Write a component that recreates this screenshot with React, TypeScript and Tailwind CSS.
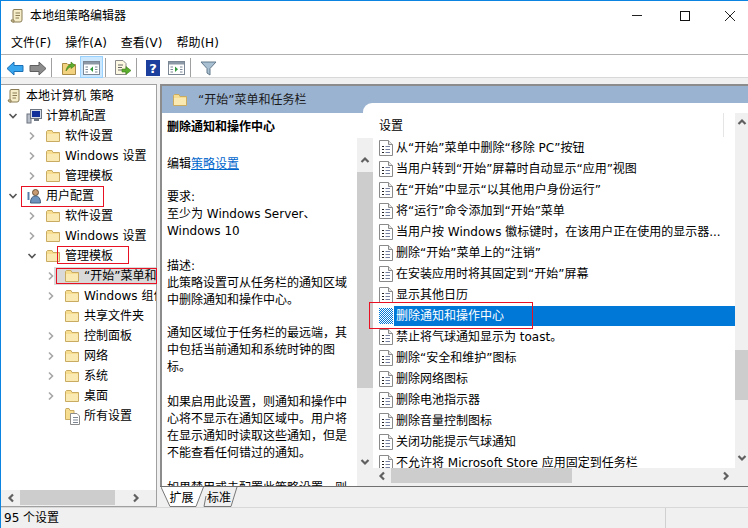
const Folder = ({ className = "" }: { className?: string }) => (
  <svg width="16" height="14" viewBox="0 0 16 14" className={className}>
    <path d="M1.5 2.5 V12.5 H14.5 V3.5 H8 L7 1.5 H2.5 Z" fill="#f7dd8f" stroke="#c9ab62" />
    <path d="M2 5 H14 V12 H2 Z" fill="#fbe9b2" />
  </svg>
);

const Chevron = ({ open }: { open?: boolean }) => (
  <svg width="10" height="10" viewBox="0 0 10 10" className="shrink-0">
    {open ? (
      <path d="M1.5 3 L5 6.5 L8.5 3" fill="none" stroke="#555" strokeWidth="1.6" />
    ) : (
      <path d="M3 1.5 L6.5 5 L3 8.5" fill="none" stroke="#a6a6a6" strokeWidth="1.6" />
    )}
  </svg>
);

const Scroll = () => (
  <svg width="17" height="17" viewBox="0 0 17 17" className="shrink-0">
    <path d="M5 2.5 H13 V13 Q13 15 11 15 H4 V4 Q4 2.5 5 2.5" fill="#f5ecc8" stroke="#8a7d55" />
    <path d="M6.5 6 H11 M6.5 8.5 H11 M6.5 11 H10" stroke="#8a7d55" />
    <path d="M2 13 H5 V15 H3 Z" fill="#e5d9ac" stroke="#8a7d55" />
  </svg>
);

const Monitor = () => (
  <svg width="16" height="16" viewBox="0 0 16 16" className="shrink-0">
    <rect x="1" y="6" width="4" height="9" fill="#b9bfc8" stroke="#6c7480" />
    <rect x="4.5" y="1.5" width="11" height="9" fill="#d7dde6" stroke="#6c7480" />
    <rect x="6" y="3" width="8" height="6" fill="#12309a" />
    <path d="M8 12 H13" stroke="#6c7480" strokeWidth="2" />
  </svg>
);

const Users = () => (
  <svg width="16" height="16" viewBox="0 0 16 16" className="shrink-0">
    <circle cx="9.5" cy="4.5" r="3" fill="#c99b72" stroke="#6b5138" />
    <path d="M4.5 15 Q4.5 8 9.5 8 Q14.5 8 14.5 15 Z" fill="#6d93bd" stroke="#44607f" />
    <path d="M2.5 4 V12" stroke="#5a7fa8" strokeWidth="2" />
  </svg>
);

const AllSettings = () => (
  <svg width="18" height="18" viewBox="0 0 18 18" className="shrink-0">
    <path d="M1.5 2.5 V12.5 H10 V3.5 H6 L5 1.5 H2 Z" fill="#f7dd8f" stroke="#c9ab62" />
    <path d="M6.5 6.5 H13 L15.5 9 V17.5 H6.5 Z" fill="#fff" stroke="#8b8b8b" />
    <path d="M9 10.5 H14 M9 13 H14 M9 15.5 H14" stroke="#7d8593" />
  </svg>
);

const PolicyIcon = ({ selected }: { selected?: boolean }) =>
  selected ? (
    <svg width="14" height="16" viewBox="0 0 14 16" className="shrink-0">
      <defs>
        <pattern id="dither" width="2" height="2" patternUnits="userSpaceOnUse">
          <rect width="2" height="2" fill="#ffffff" />
          <rect width="1" height="1" fill="#0078d7" />
          <rect x="1" y="1" width="1" height="1" fill="#0078d7" />
        </pattern>
      </defs>
      <rect width="14" height="16" fill="url(#dither)" />
    </svg>
  ) : (
    <svg width="14" height="16" viewBox="0 0 14 16" className="shrink-0">
      <path d="M0.5 0.5 H9.5 L13.5 4.5 V15.5 H0.5 Z" fill="#fff" stroke="#8a8a8a" />
      <path d="M9.5 0.5 V4.5 H13.5" fill="#e6e6e6" stroke="#8a8a8a" />
      <path d="M3 6.5 H5 M3 9.5 H5 M3 12.5 H5" stroke="#222" />
      <path d="M6.5 6.5 H11 M6.5 9.5 H11 M6.5 12.5 H11" stroke="#7680a0" />
    </svg>
  );

const Sep = () => <div className="mt-[2px] h-[19px] w-px bg-[#a0a0a0]" />;

const Toolbar = () => (
  <div className="flex h-[23px] shrink-0 items-center border-b border-[#d8d8d8] bg-white pl-[5px] pt-[1px]">
    <svg width="18" height="15" viewBox="0 0 18 15" className="mr-[5px] mt-[3px]">
      <path d="M1 7.5 L8 1 V4.5 H17 V10.5 H8 V14 Z" fill="#38a6ee" stroke="#1b6fb5" />
    </svg>
    <svg width="18" height="15" viewBox="0 0 18 15" className="mr-[4px] mt-[3px]">
      <path d="M17 7.5 L10 1 V4.5 H1 V10.5 H10 V14 Z" fill="#8c8c8c" stroke="#5f5f5f" />
    </svg>
    <Sep />
    <svg width="16" height="16" viewBox="0 0 16 16" className="ml-[9px] mr-[3px] mt-[2px]">
      <path d="M1.5 3.5 V14.5 H14.5 V4.5 H7 L6 3.5 Z" fill="#f2d27e" stroke="#a98b45" />
      <path d="M5 11 Q6 5 10 4.5 V2 L14 5.5 L10 8.5 V6.5 Q7.5 7 5 11 Z" fill="#5cae2f" stroke="#3d7d1a" strokeWidth="0.6" />
    </svg>
    <div className="mr-[2px] flex h-[22px] w-[23px] items-center justify-center border border-[#99d1ff] bg-[#cce8ff]">
      <svg width="17" height="14" viewBox="0 0 17 14" className="mt-[2px]">
        <rect x="0.5" y="0.5" width="16" height="13" fill="#fff" stroke="#7b8794" />
        <rect x="1" y="1" width="15" height="2.5" fill="#8d98a6" />
        <path d="M2.5 6 H5 M2.5 8.5 H5 M2.5 11 H5 M12 6 H14.5 M12 8.5 H14.5 M12 11 H14.5" stroke="#7b8794" />
        <path d="M10 5.5 V11 L7 8.2 Z" fill="#2f9a3a" />
      </svg>
    </div>
    <Sep />
    <svg width="18" height="17" viewBox="0 0 18 17" className="ml-[8px] mr-[4px] mt-[2px]">
      <path d="M1.5 1.5 H9 L12 4.5 V15.5 H1.5 Z" fill="#fdf8e2" stroke="#8a8a8a" />
      <path d="M4 6 H9 M4 8.5 H8 M4 11 H8" stroke="#666" />
      <path d="M8 10 H12 V7.5 L17 11.5 L12 15.5 V13 H8 Z" fill="#5cae2f" stroke="#3d7d1a" strokeWidth="0.6" />
    </svg>
    <Sep />
    <div className="ml-[9px] mr-[8px] mt-[3px] flex h-[16px] w-[14px] items-center justify-center bg-[#1c3f9e] text-[13px] font-bold leading-none text-white">
      ?
    </div>
    <svg width="17" height="14" viewBox="0 0 17 14" className="mr-[5px] mt-[3px]">
      <rect x="0.5" y="0.5" width="16" height="13" fill="#fff" stroke="#7b8794" />
      <rect x="1" y="1" width="15" height="2.5" fill="#8d98a6" />
      <path d="M2.5 6 H5 M2.5 8.5 H5 M2.5 11 H5 M12 6 H14.5 M12 8.5 H14.5 M12 11 H14.5" stroke="#7b8794" />
      <path d="M7 5.5 V11 L10 8.2 Z" fill="#2f9a3a" />
    </svg>
    <Sep />
    <svg width="17" height="15" viewBox="0 0 17 15" className="ml-[9px] mt-[3px]">
      <path d="M1 1 H16 L10 7.5 V14 L7 12 V7.5 Z" fill="#a9c0d3" stroke="#63788a" />
    </svg>
  </div>
);

const tree = [
  { label: "计算机配置", pad: "pl-[7px]", chev: "open", icon: "monitor" },
  { label: "软件设置", pad: "pl-[26px]", chev: "closed", icon: "folder" },
  { label: "Windows 设置", pad: "pl-[26px]", chev: "closed", icon: "folder" },
  { label: "管理模板", pad: "pl-[26px]", chev: "closed", icon: "folder" },
  { label: "用户配置", pad: "pl-[7px]", chev: "open", icon: "users" },
  { label: "软件设置", pad: "pl-[26px]", chev: "closed", icon: "folder" },
  { label: "Windows 设置", pad: "pl-[26px]", chev: "closed", icon: "folder" },
  { label: "管理模板", pad: "pl-[26px]", chev: "open", icon: "folder" },
  { label: "“开始”菜单和任务栏", pad: "pl-[45px]", chev: "closed", icon: "folder", current: true },
  { label: "Windows 组件", pad: "pl-[45px]", chev: "closed", icon: "folder" },
  { label: "共享文件夹", pad: "pl-[45px]", chev: "none", icon: "folder" },
  { label: "控制面板", pad: "pl-[45px]", chev: "closed", icon: "folder" },
  { label: "网络", pad: "pl-[45px]", chev: "closed", icon: "folder" },
  { label: "系统", pad: "pl-[45px]", chev: "closed", icon: "folder" },
  { label: "桌面", pad: "pl-[45px]", chev: "closed", icon: "folder" },
  { label: "所有设置", pad: "pl-[45px]", chev: "none", icon: "all" },
];

const settings = [
  "从“开始”菜单中删除“移除 PC”按钮",
  "当用户转到“开始”屏幕时自动显示“应用”视图",
  "在“开始”中显示“以其他用户身份运行”",
  "将“运行”命令添加到“开始”菜单",
  "当用户按 Windows 徽标键时，在该用户正在使用的显示器...",
  "删除“开始”菜单上的“注销”",
  "在安装应用时将其固定到“开始”屏幕",
  "显示其他日历",
  "删除通知和操作中心",
  "禁止将气球通知显示为 toast。",
  "删除“安全和维护”图标",
  "删除网络图标",
  "删除电池指示器",
  "删除音量控制图标",
  "关闭功能提示气球通知",
  "不允许将 Microsoft Store 应用固定到任务栏",
];

const Arrow = ({ d, className = "" }: { d: string; className?: string }) => (
  <svg width="10" height="10" viewBox="0 0 10 10" className={`shrink-0 ${className}`}>
    <path d={d} fill="none" stroke="#606060" strokeWidth="2.2" />
  </svg>
);

const up = "M1.5 7 L5 3.5 L8.5 7";
const down = "M1.5 3 L5 6.5 L8.5 3";
const left = "M7 1.5 L3.5 5 L7 8.5";
const right = "M3 1.5 L6.5 5 L3 8.5";

const TreePane = () => (
  <div className="flex w-[156px] shrink-0 flex-col border-y border-r border-[#a0a0a0] bg-white">
    <div className="min-h-0 flex-1 overflow-hidden">
      <div className="flex h-[21px] items-center gap-[3px] pl-[5px] whitespace-nowrap">
        <Scroll />
        <span>本地计算机 策略</span>
      </div>
      {tree.map((row, i) => (
        <div key={i} className={`flex h-[20px] items-center whitespace-nowrap ${row.pad}`}>
          {row.chev === "none" ? (
            <span className="w-[10px] shrink-0" />
          ) : (
            <Chevron open={row.chev === "open"} />
          )}
          <div
            className={`flex h-[18px] flex-1 items-center ${row.current ? "-ml-[2px] bg-[#d9d9d9] pl-[10px]" : "pl-[8px]"}`}
          >
            <span className="flex w-[21px] shrink-0 items-center">
              {row.icon === "folder" && <Folder />}
              {row.icon === "monitor" && <Monitor />}
              {row.icon === "users" && <Users />}
              {row.icon === "all" && <AllSettings />}
            </span>
            <span className="-ml-[1px]">{row.label}</span>
          </div>
        </div>
      ))}
    </div>
    <div className="flex h-[16px] shrink-0 items-start bg-[#f0f0f0]">
      <div className="flex h-[15px] w-[19px] items-center justify-center">
        <Arrow d={left} />
      </div>
      <div className="h-[15px] w-[95px] bg-[#cdcdcd]" />
      <div className="flex h-[15px] flex-1 items-center justify-center">
        <Arrow d={right} />
      </div>
    </div>
  </div>
);

const Description = () => (
  <div className="w-[195px] shrink-0 overflow-hidden bg-white pl-[5px] pt-[6px] leading-[17px] whitespace-nowrap">
    <p className="font-bold">删除通知和操作中心</p>
    <p className="mt-[20px]">
      编辑<span className="text-[#0066cc] underline">策略设置</span>
    </p>
    <p className="mt-[16px]">要求:</p>
    <p>至少为 Windows Server、</p>
    <p>Windows 10</p>
    <p className="mt-[18px]">描述:</p>
    <p>此策略设置可从任务栏的通知区域</p>
    <p>中删除通知和操作中心。</p>
    <p className="mt-[16px]">通知区域位于任务栏的最远端，其</p>
    <p>中包括当前通知和系统时钟的图</p>
    <p>标。</p>
    <p className="mt-[18px]">如果启用此设置，则通知和操作中</p>
    <p>心将不显示在通知区域中。用户将</p>
    <p>在显示通知时读取这些通知，但是</p>
    <p>不能查看任何错过的通知。</p>
    <p className="mt-[18px]">如果禁用或未配置此策略设置，则</p>
  </div>
);

const SettingsList = () => (
  <div className="flex min-w-0 flex-1 flex-col">
    {/* white tab of the list, reaches up into the blue header */}
    <div className="-mt-[10px] ml-[6px] h-[10px] shrink-0 rounded-tl-[9px] bg-white" />
    <div className="flex min-h-0 flex-1">
      <div className="flex min-w-0 flex-1 flex-col bg-white">
        <div className="flex h-[24px] shrink-0 items-center pl-[22px]">
          <span className="flex-1 pt-[2px]">设置</span>
          <div className="mr-[11px] h-[24px] w-px bg-[#e5e5e5]" />
        </div>
        <div className="flex min-h-0 flex-1">
          {/* description scrollbar */}
          <div className="mt-[1px] flex w-[16px] shrink-0 flex-col items-center bg-[#f0f0f0] pt-[17px]">
            <Arrow d={up} />
            <div className="mt-[7px] h-[216px] w-full shrink-0 bg-[#cdcdcd]" />
            <div className="flex-1" />
            <Arrow d={down} className="mb-[1px]" />
          </div>
          <div className="min-w-0 flex-1 overflow-hidden">
            {settings.map((s) => {
              const selected = s === "删除通知和操作中心";
              return (
                <div key={s} className="flex h-[21px] items-center whitespace-nowrap">
                  <span className="ml-[6px] mr-[1px] flex w-[14px] shrink-0">
                    <PolicyIcon selected={selected} />
                  </span>
                  <span
                    className={`flex h-[20px] flex-1 items-center pl-[2px] ${selected ? "bg-[#0078d7] text-white" : ""}`}
                  >
                    {s}
                  </span>
                </div>
              );
            })}
          </div>
        </div>
      </div>
      {/* list scrollbar */}
      <div className="flex w-[13px] shrink-0 flex-col items-center bg-[#f0f0f0] pt-[4px]">
        <Arrow d={up} />
        <div className="mt-[223px] h-[50px] w-full shrink-0 bg-[#cdcdcd]" />
        <div className="flex-1" />
        <Arrow d={down} className="mb-[5px]" />
      </div>
    </div>
    <div className="flex h-[18px] shrink-0 items-start bg-[#f0f0f0] pl-[20px]">
      <Arrow d={left} className="mt-[3px]" />
      <div className="ml-[4px] h-[15px] w-[181px] bg-[#cdcdcd]" />
      <div className="flex-1" />
      <Arrow d={right} className="mr-[17px] mt-[3px]" />
    </div>
  </div>
);

const Tabs = () => (
  <div className="flex h-[21px] shrink-0 border-t border-[#707070] pl-[1px]">
    <div className="relative flex h-[20px] w-[43px] items-center justify-center pr-[2px] pt-[1px]">
      <svg width="43" height="20" viewBox="0 0 43 20" className="absolute inset-0">
        <path d="M0 0 L9 19.5 H35 L42.5 0" fill="#fff" stroke="#777" />
      </svg>
      <span className="relative">扩展</span>
    </div>
    <div className="relative -ml-[4px] flex h-[20px] w-[38px] items-center justify-center pt-[1px]">
      <svg width="38" height="20" viewBox="0 0 38 20" className="absolute inset-0">
        <path d="M6 9 L4 19.5 H31 L37 0" fill="none" stroke="#777" />
      </svg>
      <span className="relative">标准</span>
    </div>
  </div>
);

const DetailPane = () => (
  <div className="ml-[3px] flex min-w-0 flex-1 flex-col border-t-2 border-[#8c8c8c]">
    <div className="flex min-h-0 flex-1 flex-col border-l-2 border-[#8c8c8c]">
      <div className="flex h-[27px] shrink-0 items-center bg-[#9ab3d1] pl-[10px]">
        <Folder />
        <span className="ml-[10px] text-[#1a1a1a]">“开始”菜单和任务栏</span>
      </div>
      <div className="flex min-h-0 flex-1">
        <Description />
        <SettingsList />
      </div>
    </div>
    <Tabs />
  </div>
);

export default function App() {
  return (
    <div className="relative flex h-[528px] w-[748px] flex-col overflow-hidden border-t border-l border-[#0a84e0] bg-[#f0f0f0] font-['DejaVu_Sans','Noto_Sans_CJK_SC',sans-serif] text-[12px] text-black">
      <div className="flex h-[29px] shrink-0 items-center bg-white">
        <div className="ml-[8px] mr-[4px]">
          <Scroll />
        </div>
        <span>本地组策略编辑器</span>
        <div className="flex-1" />
        <div className="flex items-center">
          <div className="mr-[38px] h-px w-[10px] bg-[#222]" />
          <div className="mr-[35px] size-[10px] border border-[#111]" />
          <svg width="10" height="10" viewBox="0 0 10 10" className="mr-[13px]">
            <path d="M0 0 L10 10 M10 0 L0 10" stroke="#222" />
          </svg>
        </div>
      </div>
      <div className="flex h-[25px] shrink-0 items-center gap-[14px] border-b border-[#b0b0b0] bg-white pl-[10px] pt-[1px]">
        <span>文件(F)</span>
        <span>操作(A)</span>
        <span>查看(V)</span>
        <span>帮助(H)</span>
      </div>
      <Toolbar />
      <div className="h-[6px] shrink-0" />
      <div className="flex min-h-0 flex-1">
        <TreePane />
        <DetailPane />
      </div>
      <div className="flex h-[21px] shrink-0 items-center border-t border-[#d8d8d8] pl-[3px]">
        <span className="flex-1">95 个设置</span>
        <div className="mr-[82px] h-full w-px bg-[#d0d0d0]" />
      </div>

      {/* red annotation boxes */}
      <div className="absolute left-[20px] top-[185px] h-[21px] w-[83px] border border-[#e81123]" />
      <div className="absolute left-[56px] top-[245px] h-[18px] w-[72px] border border-[#e81123]" />
      <div className="absolute left-[55px] top-[267px] h-[16px] w-[101px] border border-[#e81123]" />
      <div className="absolute left-[368px] top-[301px] h-[27px] w-[164px] border border-[#e81123]" />
    </div>
  );
}
